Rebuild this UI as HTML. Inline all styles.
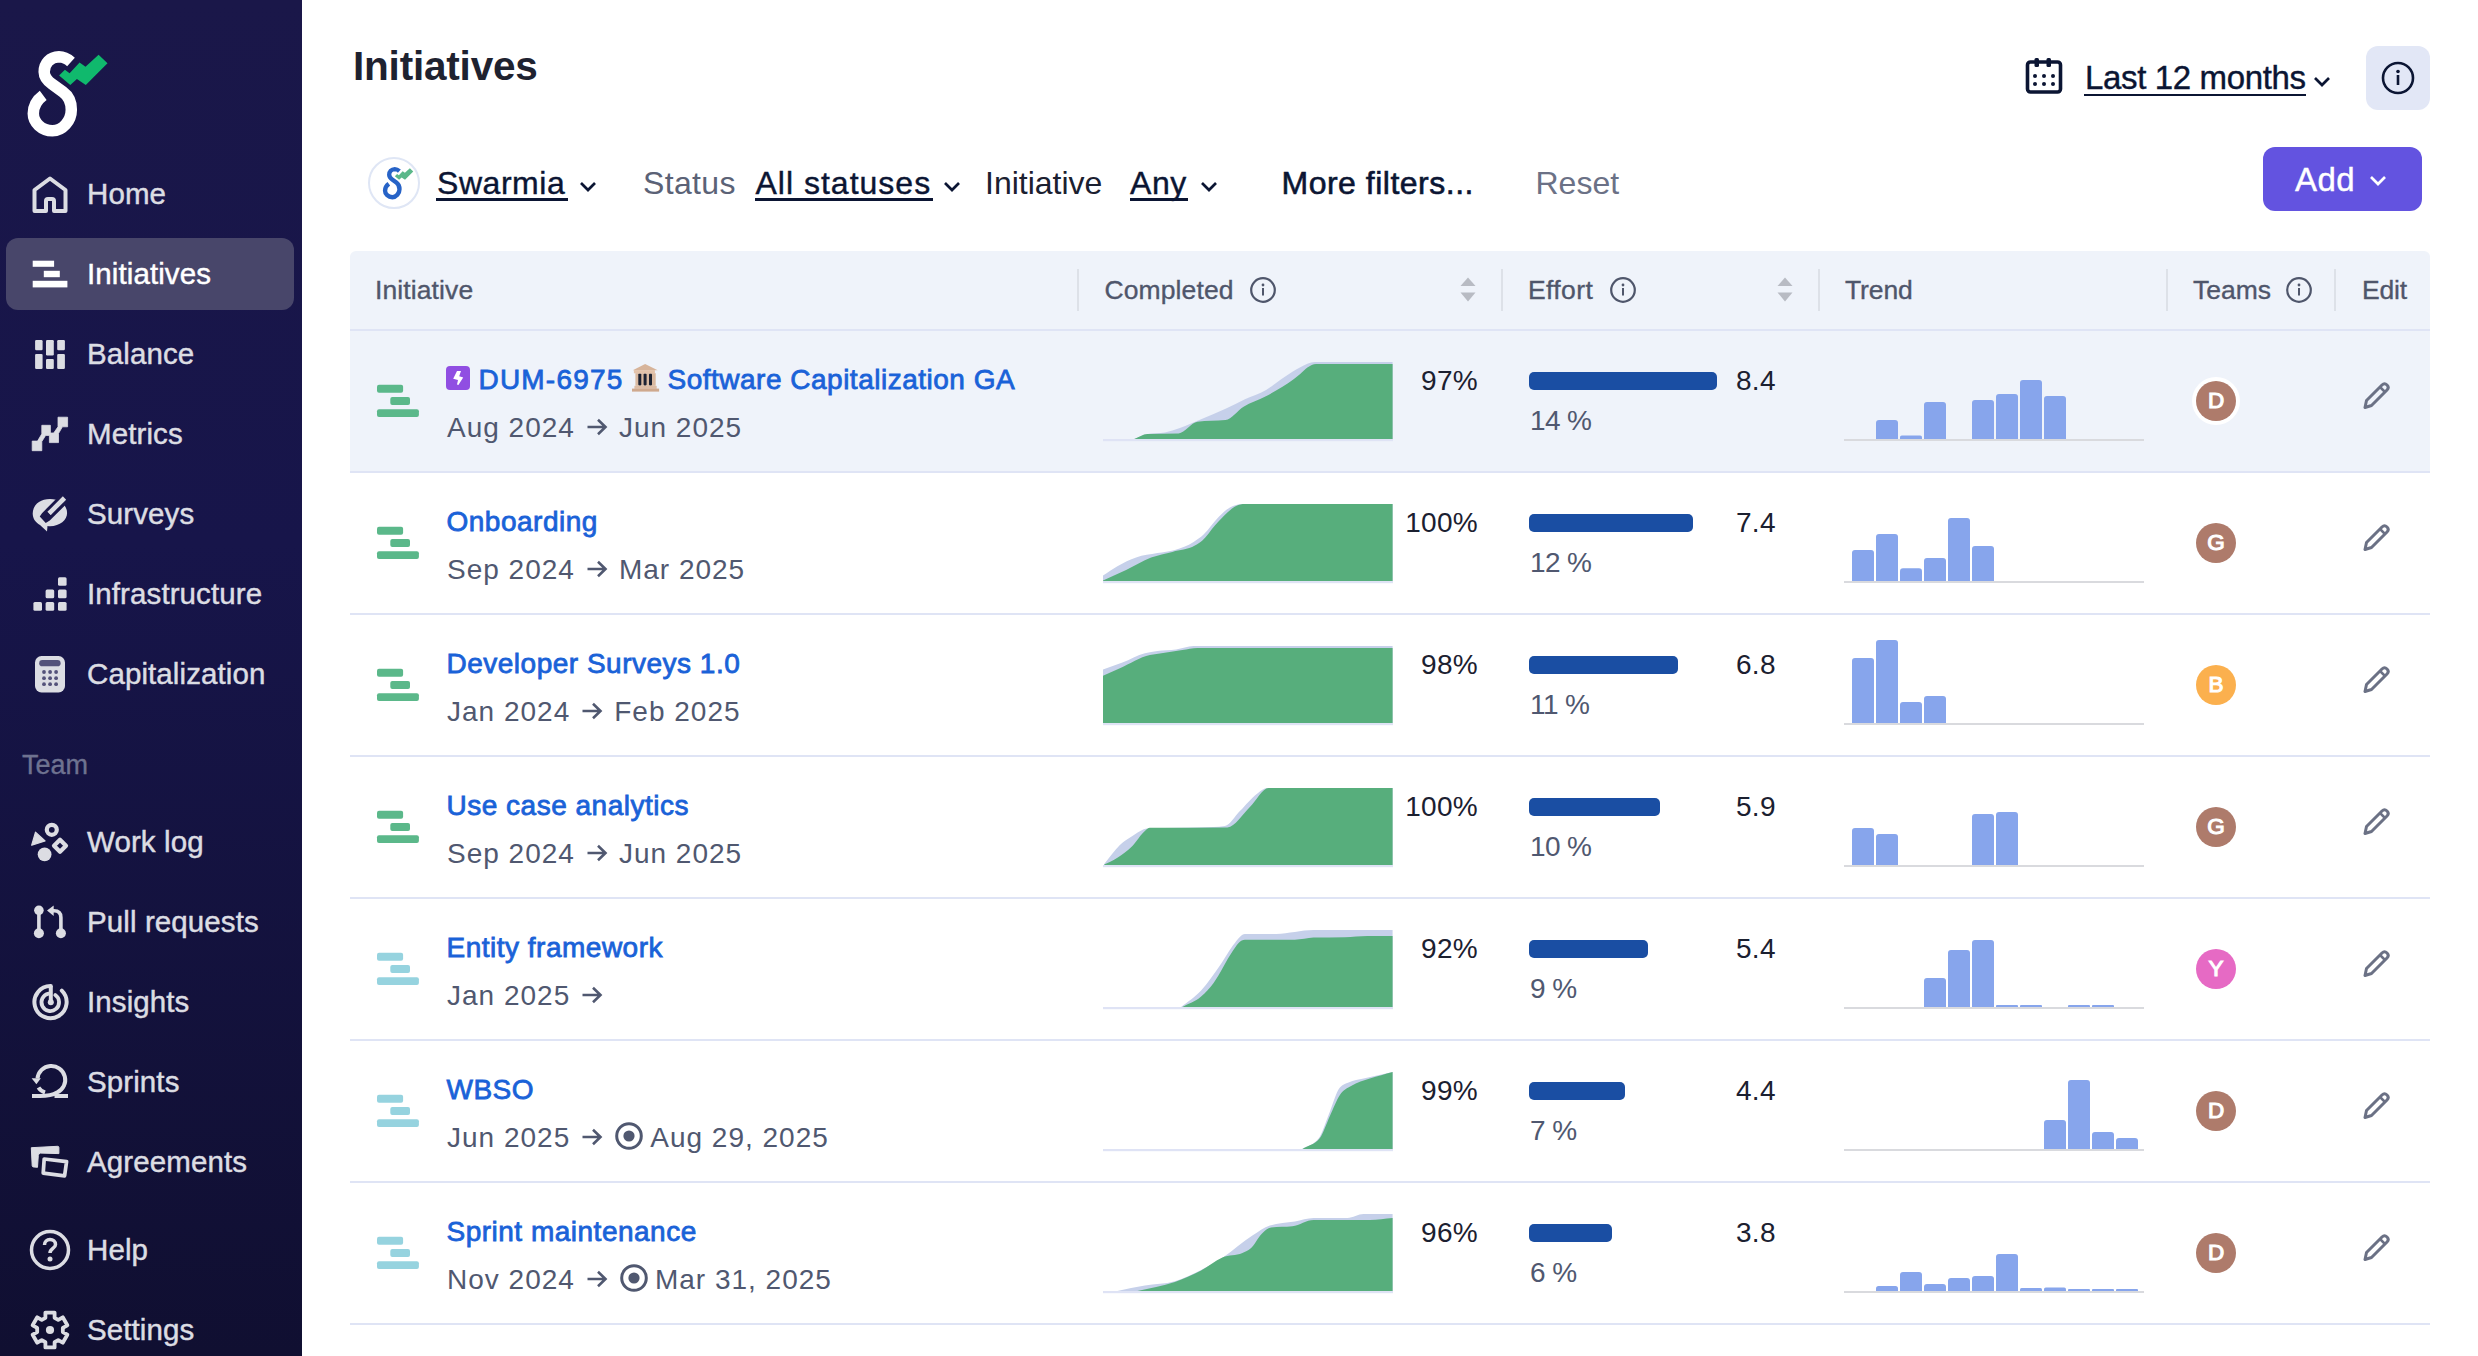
<!DOCTYPE html>
<html><head><meta charset="utf-8"><title>Initiatives</title>
<style>
*{box-sizing:border-box;margin:0;padding:0}
html,body{width:2478px;height:1356px;overflow:hidden;background:#ffffff;font-family:"Liberation Sans",sans-serif}
.t{position:absolute;white-space:nowrap;line-height:1}
#sb{position:absolute;left:0;top:0;width:302px;height:1356px;background:linear-gradient(180deg,#1a1749 0%,#17154a 40%,#100f31 100%)}
.nav{color:#dcdde3;letter-spacing:0.1px;-webkit-text-stroke:0.45px currentColor}
.ico{position:absolute}
.hdr{color:#4f566b;-webkit-text-stroke:0.35px #4f566b}
.sep{position:absolute;width:2px;height:42px;top:269px;background:#dde1e8}
.row{position:absolute;left:350px;width:2080px;height:142px;border-bottom:2px solid #dfe4f5}
.ttl{color:#1a62d8;letter-spacing:0.5px;-webkit-text-stroke:0.8px #1a62d8}
.dt{color:#505870;letter-spacing:1.0px}
.num{color:#1b2030;letter-spacing:0.3px}
.shr{color:#505870;letter-spacing:-0.6px}
.ebar{position:absolute;height:18px;background:#1a4ea3;border-radius:5px}
.av{position:absolute;width:40px;height:40px;border-radius:50%;color:#fff;font-size:22.5px;line-height:39px;text-align:center;-webkit-text-stroke:1.1px #fff}
.jira{display:inline-block;width:24px;height:1px;position:relative;margin-right:9px;margin-left:-1px}
.jira svg{position:absolute;left:0;bottom:-1px}
.bank{display:inline-block;width:28px;height:1px;margin:0 7px 0 9px;position:relative}.bank svg{position:absolute;left:0;bottom:-3px}
.arr{display:inline-block;width:22px;height:1px;margin:0 11px 0 11px;position:relative}.arr svg{position:absolute;left:0;bottom:1px}
.tgt{display:inline-block;width:28px;height:1px;margin-right:7px;margin-left:1px;position:relative}.tgt svg{position:absolute;left:0;bottom:-3px}
</style></head><body>
<div id="sb"></div>
<svg class="ico" style="left:0;top:0" width="120" height="150" viewBox="0 0 120 150">
<path d="M71,62 C66,57.5 62.5,56.8 59,56.8 C50,57 44.2,63.5 44.2,72 C44.3,77 47,80.5 52,84 L63,92 C68.5,96 71.3,102 71.3,109.7 C71.3,121 62.5,130.8 52.5,130.8 C41.5,130.8 33.3,122.5 33.3,113.6 C33.3,106 37,100 43.2,95.4" fill="none" stroke="#fff" stroke-width="11.5" stroke-linecap="butt"/>
<polygon points="59.1,75.6 64.9,69.8 69.6,73.3 79.6,62.5 85.5,66.7 98.6,54.7 107.5,63.2 85.8,84.9 76.9,79.1 70.3,84.9" fill="#10b96d"/>
</svg>
<div style="position:absolute;left:6px;top:238px;width:288px;height:72px;border-radius:12px;background:#48466a"></div>
<div class="t nav" style="left:87.0px;top:179.2px;font-size:29.5px;color:#dcdde3">Home</div>
<div class="t nav" style="left:87.0px;top:259.2px;font-size:29.5px;color:#ffffff">Initiatives</div>
<div class="t nav" style="left:87.0px;top:339.2px;font-size:29.5px;color:#dcdde3">Balance</div>
<div class="t nav" style="left:87.0px;top:419.2px;font-size:29.5px;color:#dcdde3">Metrics</div>
<div class="t nav" style="left:87.0px;top:499.2px;font-size:29.5px;color:#dcdde3">Surveys</div>
<div class="t nav" style="left:87.0px;top:579.2px;font-size:29.5px;color:#dcdde3">Infrastructure</div>
<div class="t nav" style="left:87.0px;top:659.2px;font-size:29.5px;color:#dcdde3">Capitalization</div>
<div class="t nav" style="left:87.0px;top:827.2px;font-size:29.5px;color:#dcdde3">Work log</div>
<div class="t nav" style="left:87.0px;top:907.2px;font-size:29.5px;color:#dcdde3">Pull requests</div>
<div class="t nav" style="left:87.0px;top:987.2px;font-size:29.5px;color:#dcdde3">Insights</div>
<div class="t nav" style="left:87.0px;top:1067.2px;font-size:29.5px;color:#dcdde3">Sprints</div>
<div class="t nav" style="left:87.0px;top:1147.2px;font-size:29.5px;color:#dcdde3">Agreements</div>
<div class="t nav" style="left:87.0px;top:1235.0px;font-size:29.5px;color:#dcdde3">Help</div>
<div class="t nav" style="left:87.0px;top:1315.0px;font-size:29.5px;color:#dcdde3">Settings</div>
<div class="t " style="left:22.0px;top:752.1px;font-size:27px;color:#6e7290;-webkit-text-stroke:0.35px #6e7290">Team</div>

<svg class="ico" style="left:30px;top:174px" width="40" height="40" viewBox="0 0 40 40"><path d="M4.5,16 L20,4.5 L35.5,16 V37 H24 V27 Q24,25 22,25 H18 Q16,25 16,27 V37 H4.5 Z" fill="none" stroke="#dcdde3" stroke-width="4" stroke-linejoin="round"/></svg>
<svg class="ico" style="left:32px;top:260px" width="36" height="28" viewBox="0 0 36 28"><rect x="0.7" y="0.7" width="21.4" height="6.1" fill="#fff"/><rect x="11.8" y="10.8" width="16" height="6.4" fill="#fff"/><rect x="0.7" y="20.8" width="34.7" height="6.6" fill="#fff"/></svg>
<svg class="ico" style="left:34px;top:339px" width="32" height="32" viewBox="0 0 32 32" fill="#dcdde3"><rect x="1.1" y="1" width="7.5" height="10.2" rx="1.2"/><rect x="12" y="1" width="7.8" height="15.4" rx="1.2"/><rect x="23.2" y="1" width="7.7" height="10.2" rx="1.2"/><rect x="1.1" y="14.9" width="7.5" height="15" rx="1.2"/><rect x="12" y="19.9" width="7.8" height="10" rx="1.2"/><rect x="23.2" y="14.9" width="7.7" height="15" rx="1.2"/></svg>
<svg class="ico" style="left:31px;top:416px" width="38" height="36" viewBox="0 0 38 36"><path d="M1.2,34.7 V25.1 H6.5 L10.8,17.9 V9.3 H19.4 V17 H22.7 L27,10.8 V1.2 H36.6 V10.8 H31.4 L27.5,17.5 V26.6 H18.4 V19.4 H14.6 L10.8,25.6 V34.7 Z" fill="#dcdde3" stroke="#dcdde3" stroke-width="0.8" stroke-linejoin="round"/></svg>
<svg class="ico" style="left:31px;top:494px" width="40" height="40" viewBox="0 0 40 40"><path d="M19,5 C9,5 1.7,11 1.7,19.5 C1.7,24.5 4.5,28.5 9,31 L16,37.6 L16.5,32 C17.5,32.2 18.3,32.2 19,32.2 C29,32.2 36.1,26 36.1,19 C36.1,11 29,5 19,5 Z" fill="#dcdde3"/><path d="M33,3.5 L14.5,22 L12.5,25 L16,23 L34,5" fill="none" stroke="#1a1749" stroke-width="9" stroke-linejoin="miter"/><path d="M33.5,4 L18,19.5" stroke="#dcdde3" stroke-width="4.6"/><path d="M15,17.5 L20.5,22 L13.5,24.5 Z" fill="#1a1749"/></svg>
<svg class="ico" style="left:32px;top:576px" width="36" height="36" viewBox="0 0 36 36" fill="#dcdde3"><rect x="1.4" y="26.1" width="8.6" height="8.6" rx="1.5"/><rect x="13.6" y="26.1" width="8.6" height="8.6" rx="1.5"/><rect x="26" y="26.1" width="8.6" height="8.6" rx="1.5"/><rect x="13.6" y="13.6" width="8.6" height="8.6" rx="1.5"/><rect x="26" y="13.6" width="8.6" height="8.6" rx="1.5"/><rect x="26" y="1.2" width="8.6" height="8.6" rx="1.5"/></svg>
<svg class="ico" style="left:34px;top:655px" width="32" height="38" viewBox="0 0 32 38"><rect x="1" y="1" width="30" height="36.4" rx="6.5" fill="#dcdde3"/><rect x="5.2" y="5" width="21.4" height="6.3" rx="3.15" fill="#54527a"/><g fill="#54527a"><circle cx="10" cy="17" r="1.9"/><circle cx="16.1" cy="17" r="1.9"/><circle cx="22.1" cy="17" r="1.9"/><circle cx="10" cy="23.2" r="1.9"/><circle cx="16.1" cy="23.2" r="1.9"/><circle cx="22.1" cy="23.2" r="1.9"/><circle cx="10" cy="29.2" r="1.9"/><circle cx="16.1" cy="29.2" r="1.9"/><circle cx="22.1" cy="29.2" r="1.9"/></g></svg>
<svg class="ico" style="left:30px;top:821px" width="40" height="42" viewBox="0 0 40 42"><circle cx="21.8" cy="8.8" r="5" fill="none" stroke="#dcdde3" stroke-width="4.2"/><path d="M1.7,24.2 L5.5,11.2 L15.1,19.9 Z" fill="#dcdde3" stroke="#dcdde3" stroke-width="1.2" stroke-linejoin="round"/><circle cx="14.6" cy="33.3" r="6.9" fill="#dcdde3"/><path d="M30,18.7 L36,24.7 L30,30.7 L24,24.7 Z" fill="none" stroke="#dcdde3" stroke-width="4.2" stroke-linejoin="round"/></svg>
<svg class="ico" style="left:32px;top:904px" width="36" height="36" viewBox="0 0 36 36"><circle cx="6.9" cy="6.3" r="4.8" fill="#dcdde3"/><circle cx="6.9" cy="29.3" r="5" fill="#dcdde3"/><circle cx="28.9" cy="29.3" r="5" fill="#dcdde3"/><path d="M6.9,6.3 V29.3" stroke="#dcdde3" stroke-width="3.6"/><path d="M28.9,29.3 V13.5 C28.9,9.2 26.3,6.8 22,6.8 H19" fill="none" stroke="#dcdde3" stroke-width="3.6"/><path d="M15,6.6 L21.7,1.4 L21.7,12 Z" fill="#dcdde3"/></svg>
<svg class="ico" style="left:30px;top:982px" width="40" height="40" viewBox="0 0 40 40"><path d="M20.8,4 A16.1,16.1 0 1 0 31.8,8.6" fill="none" stroke="#dcdde3" stroke-width="4" stroke-linecap="round"/><path d="M18.5,11.6 A8.8,8.8 0 1 0 25.3,13" fill="none" stroke="#dcdde3" stroke-width="3.8" stroke-linecap="round"/><path d="M20.8,4 V20" stroke="#dcdde3" stroke-width="4"/><circle cx="20.8" cy="20.3" r="3" fill="#dcdde3"/></svg>
<svg class="ico" style="left:30px;top:1060px" width="40" height="40" viewBox="0 0 40 40"><path d="M7.5,18.5 A13.9,13.9 0 1 1 27,32.5 C22,35.5 16,36 10,36 H2" fill="none" stroke="#dcdde3" stroke-width="4"/><path d="M24.5,36 H38" stroke="#dcdde3" stroke-width="4"/><path d="M8.5,27.5 C10,30 12,31.5 15,32.5" fill="none" stroke="#dcdde3" stroke-width="4"/><path d="M1.6,18.2 L10.9,18.2 L6.4,24.3 Z" fill="#dcdde3"/></svg>
<svg class="ico" style="left:30px;top:1144px" width="40" height="40" viewBox="0 0 40 40"><path d="M1.3,3.7 L27.6,2.3 Q28.8,2.3 28.9,3.5 L28.9,9.6 L10.5,9.1 Q8.5,9.3 8.3,11.5 L7.5,23.3 L3.2,22.9 Q2.3,22.8 2.2,21.8 Z" fill="#dcdde3" stroke="#dcdde3" stroke-width="1" stroke-linejoin="round"/><path d="M14.2,15 L36.6,17.6 L34.6,31.8 L13.2,29.2 Z" fill="none" stroke="#dcdde3" stroke-width="3.7" stroke-linejoin="round"/></svg>
<svg class="ico" style="left:28px;top:1228px" width="44" height="44" viewBox="0 0 44 44"><circle cx="22" cy="22" r="18.5" fill="none" stroke="#dcdde3" stroke-width="3.5"/><path d="M16.5,17 C16.5,13.5 19,11.5 22,11.5 C25,11.5 27.5,13.5 27.5,16.5 C27.5,20.5 22,20.5 22,25" fill="none" stroke="#dcdde3" stroke-width="3.5"/><circle cx="22" cy="31" r="2.5" fill="#dcdde3"/></svg>
<svg class="ico" style="left:30px;top:1310px" width="40" height="40" viewBox="0 0 40 40"><path d="M15.40,7.84 L15.40,2.60 L24.60,2.60 L24.60,7.84 L28.23,9.94 L32.77,7.32 L37.37,15.28 L32.83,17.90 L32.83,22.10 L37.37,24.72 L32.77,32.68 L28.23,30.06 L24.60,32.16 L24.60,37.40 L15.40,37.40 L15.40,32.16 L11.77,30.06 L7.23,32.68 L2.63,24.72 L7.17,22.10 L7.17,17.90 L2.63,15.28 L7.23,7.32 L11.77,9.94 Z" fill="none" stroke="#dcdde3" stroke-width="3.8" stroke-linejoin="round"/><circle cx="20" cy="20" r="4.1" fill="#dcdde3"/></svg>
<div class="t " style="left:353.0px;top:45.7px;font-size:40.5px;font-weight:bold;color:#1e2230;letter-spacing:-0.2px">Initiatives</div>
<svg class="ico" style="left:2024px;top:56px" width="40" height="40" viewBox="0 0 40 40"><rect x="3.5" y="6" width="33" height="30" rx="3" fill="none" stroke="#0b1533" stroke-width="3.6"/><rect x="10.5" y="2" width="4.5" height="9" rx="1.5" fill="#0b1533"/><rect x="22.5" y="2" width="4.5" height="9" rx="1.5" fill="#0b1533"/><g fill="#0b1533"><circle cx="11" cy="20" r="2"/><circle cx="20" cy="20" r="2"/><circle cx="29" cy="20" r="2"/><circle cx="11" cy="28" r="2"/><circle cx="20" cy="28" r="2"/><circle cx="29" cy="28" r="2"/></g></svg>
<div class="t " style="left:2085.0px;top:61.4px;font-size:33px;color:#0b1533;letter-spacing:-0.35px;-webkit-text-stroke:0.4px #0b1533">Last 12 months</div>
<div style="position:absolute;left:2084px;top:93.5px;width:222px;height:2.6px;background:#0b1533"></div>
<svg class="ico" style="left:2313px;top:75.5px" width="18" height="12" viewBox="0 0 18 12"><path d="M2,2 L9.0,9 L16,2" fill="none" stroke="#0b1533" stroke-width="2.7"/></svg>
<div style="position:absolute;left:2366px;top:46px;width:64px;height:63.5px;border-radius:12px;background:#e2e7f6"></div>
<svg class="ico" style="left:2380px;top:60px" width="36" height="36" viewBox="0 0 36 36"><circle cx="18" cy="18" r="15" fill="none" stroke="#0b1533" stroke-width="2.6"/><circle cx="18" cy="11.5" r="1.8" fill="#0b1533"/><rect x="16.7" y="15" width="2.6" height="10" fill="#0b1533"/></svg>
<div style="position:absolute;left:368px;top:157px;width:52px;height:52px;border-radius:50%;border:2px solid #dfe6f5;background:#fff"></div>
<svg class="ico" style="left:368px;top:157px" width="52" height="52" viewBox="0 0 52 52"><g transform="translate(4.4,-9.5) scale(0.38)">
<path d="M71,62 C66,57.5 62.5,56.8 59,56.8 C50,57 44.2,63.5 44.2,72 C44.3,77 47,80.5 52,84 L63,92 C68.5,96 71.3,102 71.3,109.7 C71.3,121 62.5,130.8 52.5,130.8 C41.5,130.8 33.3,122.5 33.3,113.6 C33.3,106 37,100 43.2,95.4" fill="none" stroke="#2763c7" stroke-width="11.5"/>
<polygon points="59.1,75.6 64.9,69.8 69.6,73.3 79.6,62.5 85.5,66.7 98.6,54.7 107.5,63.2 85.8,84.9 76.9,79.1 70.3,84.9" fill="#5bb88a"/></g>
</svg>
<div class="t " style="left:437.0px;top:166.7px;font-size:32px;color:#0b1533;letter-spacing:0.55px;-webkit-text-stroke:0.4px #0b1533">Swarmia</div>
<div style="position:absolute;left:436px;top:198.3px;width:132px;height:2.5px;background:#0b1533"></div>
<svg class="ico" style="left:578.5px;top:180.5px" width="18" height="12" viewBox="0 0 18 12"><path d="M2,2 L9.0,9 L16,2" fill="none" stroke="#0b1533" stroke-width="2.7"/></svg>
<div class="t " style="left:643.0px;top:166.9px;font-size:32px;color:#5b6276;letter-spacing:0.35px">Status</div>
<div class="t " style="left:755.5px;top:166.9px;font-size:32px;color:#0b1533;letter-spacing:1.0px;-webkit-text-stroke:0.4px #0b1533">All statuses</div>
<div style="position:absolute;left:755px;top:198.3px;width:178px;height:2.5px;background:#0b1533"></div>
<svg class="ico" style="left:943px;top:180.5px" width="18" height="12" viewBox="0 0 18 12"><path d="M2,2 L9.0,9 L16,2" fill="none" stroke="#0b1533" stroke-width="2.7"/></svg>
<div class="t " style="left:985.0px;top:166.9px;font-size:32px;color:#1b2030;letter-spacing:0.0px">Initiative</div>
<div class="t " style="left:1130.0px;top:166.9px;font-size:32px;color:#0b1533;letter-spacing:0.6px;-webkit-text-stroke:0.4px #0b1533">Any</div>
<div style="position:absolute;left:1130px;top:198.3px;width:58px;height:2.5px;background:#0b1533"></div>
<svg class="ico" style="left:1199.5px;top:180.5px" width="18" height="12" viewBox="0 0 18 12"><path d="M2,2 L9.0,9 L16,2" fill="none" stroke="#0b1533" stroke-width="2.7"/></svg>
<div class="t " style="left:1281.5px;top:166.9px;font-size:32px;color:#0b1533;letter-spacing:0.5px;-webkit-text-stroke:0.6px #0b1533">More filters...</div>
<div class="t " style="left:1535.5px;top:166.9px;font-size:32px;color:#6b7186;letter-spacing:0px">Reset</div>
<div style="position:absolute;left:2263px;top:147px;width:159px;height:64px;border-radius:12px;background:#6353e0"></div>
<div class="t " style="left:2295.0px;top:162.5px;font-size:33px;color:#fff;letter-spacing:0.5px;-webkit-text-stroke:0.4px #fff">Add</div>
<svg class="ico" style="left:2369px;top:174.5px" width="18" height="12" viewBox="0 0 18 12"><path d="M2,2 L9.0,9 L16,2" fill="none" stroke="#fff" stroke-width="2.7"/></svg>
<div style="position:absolute;left:350px;top:251px;width:2080px;height:80px;background:#eff3fa;border-radius:6px 6px 0 0;border-bottom:2px solid #dfe4f5"></div>
<div class="sep" style="left:1077px"></div>
<div class="sep" style="left:1501px"></div>
<div class="sep" style="left:1818px"></div>
<div class="sep" style="left:2166px"></div>
<div class="sep" style="left:2334px"></div>
<div class="t hdr" style="left:375.0px;top:276.7px;font-size:26.5px;letter-spacing:0.1px">Initiative</div>
<div class="t hdr" style="left:1104.5px;top:276.7px;font-size:26.5px;letter-spacing:0.1px">Completed</div>
<div class="t hdr" style="left:1528.0px;top:276.7px;font-size:26.5px;letter-spacing:0.4px">Effort</div>
<div class="t hdr" style="left:1845.0px;top:276.7px;font-size:26.5px;letter-spacing:-0.1px">Trend</div>
<div class="t hdr" style="left:2193.0px;top:276.7px;font-size:26.5px;letter-spacing:0.0px">Teams</div>
<div class="t hdr" style="left:2362.0px;top:276.7px;font-size:26.5px;letter-spacing:-0.2px">Edit</div>
<svg class="ico" style="left:1249px;top:276px" width="28" height="28" viewBox="0 0 28 28"><circle cx="14" cy="14" r="11.8" fill="none" stroke="#4f566b" stroke-width="2.2"/><circle cx="14" cy="9" r="1.4" fill="#4f566b"/><rect x="13" y="12" width="2" height="7.5" fill="#4f566b"/></svg>
<svg class="ico" style="left:1609px;top:276px" width="28" height="28" viewBox="0 0 28 28"><circle cx="14" cy="14" r="11.8" fill="none" stroke="#4f566b" stroke-width="2.2"/><circle cx="14" cy="9" r="1.4" fill="#4f566b"/><rect x="13" y="12" width="2" height="7.5" fill="#4f566b"/></svg>
<svg class="ico" style="left:2285px;top:276px" width="28" height="28" viewBox="0 0 28 28"><circle cx="14" cy="14" r="11.8" fill="none" stroke="#4f566b" stroke-width="2.2"/><circle cx="14" cy="9" r="1.4" fill="#4f566b"/><rect x="13" y="12" width="2" height="7.5" fill="#4f566b"/></svg>
<svg class="ico" style="left:1460px;top:277px" width="16" height="25" viewBox="0 0 16 25"><path d="M8,0.5 L15.5,9 H0.5 Z" fill="#b8bbc3"/><path d="M0.5,15.5 H15.5 L8,24.5 Z" fill="#b8bbc3"/></svg>
<svg class="ico" style="left:1777px;top:277px" width="16" height="25" viewBox="0 0 16 25"><path d="M8,0.5 L15.5,9 H0.5 Z" fill="#b8bbc3"/><path d="M0.5,15.5 H15.5 L8,24.5 Z" fill="#b8bbc3"/></svg>
<div class="row" style="top:331px;height:142px;background:#eff3fa"></div>
<svg class="ico" style="left:376px;top:384px" width="44" height="34" viewBox="0 0 44 34"><rect x="1" y="0.7" width="26.1" height="8.1" rx="2" fill="#5bb88a"/><rect x="14.3" y="13.1" width="19.7" height="7.8" rx="2" fill="#5bb88a"/><rect x="1" y="25.2" width="41.9" height="7.8" rx="2" fill="#5bb88a"/></svg>
<div class="t ttl" style="left:446.5px;top:365.5px;font-size:28px;"><span class="jira"><svg width="24" height="24" viewBox="0 0 24 24"><rect width="24" height="24" rx="4" fill="#904ee2"/><path d="M11,5 L15,5 L13.2,10.2 L17.2,11.4 L12.4,19 L11,18.4 L12,14 L7.2,12.8 Z" fill="#fff"/></svg></span><span style="letter-spacing:1.2px">DUM-6975</span><span class="bank"><svg width="28" height="28" viewBox="0 0 28 28"><path d="M13.1,0 L25.7,6.3 H0.8 Z" fill="#d7b49a"/><rect x="1.9" y="6.1" width="21" height="3.2" fill="#e3c3ab"/><rect x="3.4" y="9.2" width="20.3" height="12.6" fill="#d9b9a0"/><rect x="6.3" y="9.8" width="3" height="11.6" rx="0.8" fill="#1c2233"/><rect x="11.6" y="9.8" width="3" height="11.6" rx="0.8" fill="#1c2233"/><rect x="17" y="9.8" width="3" height="11.6" rx="0.8" fill="#1c2233"/><rect x="2.4" y="21.8" width="22.3" height="3" fill="#dcbca4"/><rect x="0" y="24.6" width="27.1" height="3" fill="#cfa98e"/></svg></span>Software Capitalization GA</div>
<div class="t dt" style="left:447.0px;top:413.6px;font-size:28px;">Aug 2024<span class="arr"><svg width="22" height="18" viewBox="0 0 22 18"><path d="M1.5,9 H19.5 M12,1.8 L19.5,9 L12,16.2" fill="none" stroke="#505870" stroke-width="2.6"/></svg></span>Jun 2025</div>
<svg class="ico" style="left:1103px;top:362px" width="291" height="80" viewBox="0 0 291 80"><rect x="0" y="77" width="290" height="2.2" fill="#dfe3f5"/><path d="M31.25,77.00 C35.63,75.30 40.02,72.65 44.40,71.90 C50.23,70.90 56.07,71.40 61.90,70.40 C66.90,69.54 71.90,67.71 76.90,66.00 C83.97,63.58 91.03,60.21 98.10,57.25 C106.43,53.76 114.77,50.49 123.10,46.60 C129.37,43.68 135.63,40.20 141.90,37.25 C148.97,33.92 156.03,31.98 163.10,27.90 C169.37,24.28 175.63,18.87 181.90,14.75 C186.90,11.46 191.90,7.86 196.90,5.40 C201.90,2.94 206.90,0.00 211.90,0.00 C237.80,0.00 263.70,0.00 289.60,0.00 L289.6,77 L31.2,77 Z" fill="#c6d0ea"/><path d="M31.25,77.00 C35.63,75.30 40.02,72.04 44.40,71.90 C54.80,71.57 65.20,71.73 75.60,71.40 C81.87,71.20 88.13,60.49 94.40,59.75 C103.77,58.65 113.13,59.20 122.50,58.10 C128.53,57.39 134.57,48.46 140.60,44.75 C147.70,40.39 154.80,38.50 161.90,34.75 C165.63,32.78 169.37,30.73 173.10,28.50 C181.03,23.76 188.97,19.06 196.90,12.25 C199.40,10.10 201.90,7.09 204.40,5.40 C207.30,3.44 210.20,1.90 213.10,1.90 C238.60,1.90 264.10,1.90 289.60,1.90 L289.6,77 L31.2,77 Z" fill="#57ae7c"/></svg>
<div class="t num" style="right:1000.0px;top:367.3px;font-size:28px;">97%</div>
<div class="ebar" style="left:1529px;top:372px;width:188px"></div>
<div class="t num" style="left:1736.0px;top:367.3px;font-size:28px;">8.4</div>
<div class="t shr" style="left:1530.0px;top:407.3px;font-size:28px;">14 %</div>
<div style="position:absolute;left:1844px;top:438.5px;width:300px;height:2px;background:#d9dade"></div>
<svg class="ico" style="left:1844px;top:339px" width="300" height="100" viewBox="0 0 300 100"><defs><clipPath id="cp0"><rect x="0" y="0" width="300" height="100"/></clipPath></defs><g clip-path="url(#cp0)"><rect x="32" y="81.0" width="22" height="22.0" rx="3.0" fill="#87a5ec"/><rect x="56" y="96.5" width="22" height="5.2" rx="1.8" fill="#87a5ec"/><rect x="80" y="63.0" width="22" height="40.0" rx="3.0" fill="#87a5ec"/><rect x="128" y="61.0" width="22" height="42.0" rx="3.0" fill="#87a5ec"/><rect x="152" y="55.0" width="22" height="48.0" rx="3.0" fill="#87a5ec"/><rect x="176" y="41.0" width="22" height="62.0" rx="3.0" fill="#87a5ec"/><rect x="200" y="57.0" width="22" height="46.0" rx="3.0" fill="#87a5ec"/></g></svg>
<div style="position:absolute;left:2192px;top:376.7px;width:48px;height:48px;border-radius:50%;background:#fff"></div>
<div class="av" style="left:2196px;top:380.7px;background:#ae7b6b">D</div>
<svg class="ico" style="left:2360px;top:380px" width="32" height="32" viewBox="0 0 32 32"><path d="M5,27.5 L6.5,20.5 L22,5 C23.5,3.5 25.5,3.5 27,5 C28.5,6.5 28.5,8.5 27,10 L11.5,25.5 Z" fill="none" stroke="#6b7185" stroke-width="3" stroke-linejoin="round"/><path d="M20,7 L25,12" stroke="#6b7185" stroke-width="2.5"/></svg>
<div class="row" style="top:473px;height:142px;background:transparent"></div>
<svg class="ico" style="left:376px;top:526px" width="44" height="34" viewBox="0 0 44 34"><rect x="1" y="0.7" width="26.1" height="8.1" rx="2" fill="#5bb88a"/><rect x="14.3" y="13.1" width="19.7" height="7.8" rx="2" fill="#5bb88a"/><rect x="1" y="25.2" width="41.9" height="7.8" rx="2" fill="#5bb88a"/></svg>
<div class="t ttl" style="left:446.5px;top:507.5px;font-size:28px;">Onboarding</div>
<div class="t dt" style="left:447.0px;top:555.6px;font-size:28px;">Sep 2024<span class="arr"><svg width="22" height="18" viewBox="0 0 22 18"><path d="M1.5,9 H19.5 M12,1.8 L19.5,9 L12,16.2" fill="none" stroke="#505870" stroke-width="2.6"/></svg></span>Mar 2025</div>
<svg class="ico" style="left:1103px;top:504px" width="291" height="80" viewBox="0 0 291 80"><rect x="0" y="77" width="290" height="2.2" fill="#dfe3f5"/><path d="M0.00,71.60 C4.80,68.48 9.60,64.99 14.40,62.25 C20.63,58.69 26.87,55.66 33.10,53.50 C40.20,51.05 47.30,50.45 54.40,49.10 C60.23,47.99 66.07,47.76 71.90,46.00 C78.13,44.12 84.37,41.89 90.60,37.90 C93.93,35.77 97.27,33.46 100.60,30.40 C105.60,25.82 110.60,17.78 115.60,12.90 C119.37,9.22 123.13,5.61 126.90,3.50 C131.07,1.17 135.23,0.00 139.40,0.00 C189.47,0.00 239.53,0.00 289.60,0.00 L289.6,77 L0.0,77 Z" fill="#c6d0ea"/><path d="M0.00,76.50 C7.70,73.00 15.40,69.67 23.10,66.00 C31.43,62.03 39.77,56.60 48.10,53.50 C55.20,50.86 62.30,49.83 69.40,47.90 C76.90,45.87 84.40,45.80 91.90,41.60 C94.40,40.20 96.90,38.77 99.40,36.60 C103.57,32.99 107.73,26.28 111.90,21.60 C116.07,16.92 120.23,12.16 124.40,8.50 C127.30,5.96 130.20,3.15 133.10,1.90 C136.03,0.63 138.97,0.00 141.90,0.00 C191.13,0.00 240.37,0.00 289.60,0.00 L289.6,77 L0.0,77 Z" fill="#57ae7c"/></svg>
<div class="t num" style="right:1000.0px;top:509.3px;font-size:28px;">100%</div>
<div class="ebar" style="left:1529px;top:514px;width:164px"></div>
<div class="t num" style="left:1736.0px;top:509.3px;font-size:28px;">7.4</div>
<div class="t shr" style="left:1530.0px;top:549.3px;font-size:28px;">12 %</div>
<div style="position:absolute;left:1844px;top:580.5px;width:300px;height:2px;background:#d9dade"></div>
<svg class="ico" style="left:1844px;top:481px" width="300" height="100" viewBox="0 0 300 100"><defs><clipPath id="cp1"><rect x="0" y="0" width="300" height="100"/></clipPath></defs><g clip-path="url(#cp1)"><rect x="8" y="69.0" width="22" height="34.0" rx="3.0" fill="#87a5ec"/><rect x="32" y="53.0" width="22" height="50.0" rx="3.0" fill="#87a5ec"/><rect x="56" y="87.3" width="22" height="15.7" rx="3.0" fill="#87a5ec"/><rect x="80" y="77.0" width="22" height="26.0" rx="3.0" fill="#87a5ec"/><rect x="104" y="37.0" width="22" height="66.0" rx="3.0" fill="#87a5ec"/><rect x="128" y="65.0" width="22" height="38.0" rx="3.0" fill="#87a5ec"/></g></svg>
<div class="av" style="left:2196px;top:522.7px;background:#ae7b6b">G</div>
<svg class="ico" style="left:2360px;top:522px" width="32" height="32" viewBox="0 0 32 32"><path d="M5,27.5 L6.5,20.5 L22,5 C23.5,3.5 25.5,3.5 27,5 C28.5,6.5 28.5,8.5 27,10 L11.5,25.5 Z" fill="none" stroke="#6b7185" stroke-width="3" stroke-linejoin="round"/><path d="M20,7 L25,12" stroke="#6b7185" stroke-width="2.5"/></svg>
<div class="row" style="top:615px;height:142px;background:transparent"></div>
<svg class="ico" style="left:376px;top:668px" width="44" height="34" viewBox="0 0 44 34"><rect x="1" y="0.7" width="26.1" height="8.1" rx="2" fill="#5bb88a"/><rect x="14.3" y="13.1" width="19.7" height="7.8" rx="2" fill="#5bb88a"/><rect x="1" y="25.2" width="41.9" height="7.8" rx="2" fill="#5bb88a"/></svg>
<div class="t ttl" style="left:446.5px;top:649.5px;font-size:28px;">Developer Surveys 1.0</div>
<div class="t dt" style="left:447.0px;top:697.6px;font-size:28px;">Jan 2024<span class="arr"><svg width="22" height="18" viewBox="0 0 22 18"><path d="M1.5,9 H19.5 M12,1.8 L19.5,9 L12,16.2" fill="none" stroke="#505870" stroke-width="2.6"/></svg></span>Feb 2025</div>
<svg class="ico" style="left:1103px;top:646px" width="291" height="80" viewBox="0 0 291 80"><rect x="0" y="77" width="290" height="2.2" fill="#dfe3f5"/><path d="M0.00,23.50 C6.47,21.20 12.93,19.08 19.40,16.60 C26.90,13.72 34.40,9.19 41.90,7.25 C46.07,6.17 50.23,5.67 54.40,5.10 C60.63,4.24 66.87,4.40 73.10,3.50 C78.93,2.66 84.77,0.00 90.60,0.00 C156.93,0.00 223.27,0.00 289.60,0.00 L289.6,77 L0.0,77 Z" fill="#c6d0ea"/><path d="M0.00,29.75 C5.63,27.25 11.27,24.74 16.90,22.25 C26.90,17.83 36.90,11.32 46.90,9.10 C50.23,8.36 53.57,8.11 56.90,7.60 C64.40,6.44 71.90,4.99 79.40,3.90 C84.40,3.17 89.40,1.90 94.40,1.90 C159.47,1.90 224.53,1.90 289.60,1.90 L289.6,77 L0.0,77 Z" fill="#57ae7c"/></svg>
<div class="t num" style="right:1000.0px;top:651.3px;font-size:28px;">98%</div>
<div class="ebar" style="left:1529px;top:656px;width:149px"></div>
<div class="t num" style="left:1736.0px;top:651.3px;font-size:28px;">6.8</div>
<div class="t shr" style="left:1530.0px;top:691.3px;font-size:28px;">11 %</div>
<div style="position:absolute;left:1844px;top:722.5px;width:300px;height:2px;background:#d9dade"></div>
<svg class="ico" style="left:1844px;top:623px" width="300" height="100" viewBox="0 0 300 100"><defs><clipPath id="cp2"><rect x="0" y="0" width="300" height="100"/></clipPath></defs><g clip-path="url(#cp2)"><rect x="8" y="35.0" width="22" height="68.0" rx="3.0" fill="#87a5ec"/><rect x="32" y="17.0" width="22" height="86.0" rx="3.0" fill="#87a5ec"/><rect x="56" y="79.0" width="22" height="24.0" rx="3.0" fill="#87a5ec"/><rect x="80" y="73.0" width="22" height="30.0" rx="3.0" fill="#87a5ec"/></g></svg>
<div class="av" style="left:2196px;top:664.7px;background:#fbb04e">B</div>
<svg class="ico" style="left:2360px;top:664px" width="32" height="32" viewBox="0 0 32 32"><path d="M5,27.5 L6.5,20.5 L22,5 C23.5,3.5 25.5,3.5 27,5 C28.5,6.5 28.5,8.5 27,10 L11.5,25.5 Z" fill="none" stroke="#6b7185" stroke-width="3" stroke-linejoin="round"/><path d="M20,7 L25,12" stroke="#6b7185" stroke-width="2.5"/></svg>
<div class="row" style="top:757px;height:142px;background:transparent"></div>
<svg class="ico" style="left:376px;top:810px" width="44" height="34" viewBox="0 0 44 34"><rect x="1" y="0.7" width="26.1" height="8.1" rx="2" fill="#5bb88a"/><rect x="14.3" y="13.1" width="19.7" height="7.8" rx="2" fill="#5bb88a"/><rect x="1" y="25.2" width="41.9" height="7.8" rx="2" fill="#5bb88a"/></svg>
<div class="t ttl" style="left:446.5px;top:791.5px;font-size:28px;">Use case analytics</div>
<div class="t dt" style="left:447.0px;top:839.6px;font-size:28px;">Sep 2024<span class="arr"><svg width="22" height="18" viewBox="0 0 22 18"><path d="M1.5,9 H19.5 M12,1.8 L19.5,9 L12,16.2" fill="none" stroke="#505870" stroke-width="2.6"/></svg></span>Jun 2025</div>
<svg class="ico" style="left:1103px;top:788px" width="291" height="80" viewBox="0 0 291 80"><rect x="0" y="77" width="290" height="2.2" fill="#dfe3f5"/><path d="M1.25,76.00 C6.47,69.63 11.68,61.77 16.90,56.90 C21.07,53.01 25.23,50.65 29.40,48.10 C34.40,45.04 39.40,40.83 44.40,40.60 C66.47,39.60 88.53,40.10 110.60,39.10 C114.37,38.93 118.13,38.77 121.90,38.10 C126.90,37.22 131.90,28.13 136.90,23.10 C142.73,17.24 148.57,9.55 154.40,5.40 C157.73,3.03 161.07,0.00 164.40,0.00 C206.13,0.00 247.87,0.00 289.60,0.00 L289.6,77 L1.2,77 Z" fill="#c6d0ea"/><path d="M1.25,76.60 C5.63,74.32 10.02,72.58 14.40,69.75 C19.40,66.52 24.40,62.97 29.40,57.90 C33.57,53.68 37.73,46.20 41.90,42.90 C43.57,41.58 45.23,39.77 46.90,39.75 C72.73,39.52 98.57,39.63 124.40,39.40 C131.90,39.33 139.40,26.35 146.90,19.10 C153.13,13.07 159.37,0.00 165.60,0.00 C206.93,0.00 248.27,0.00 289.60,0.00 L289.6,77 L1.2,77 Z" fill="#57ae7c"/></svg>
<div class="t num" style="right:1000.0px;top:793.3px;font-size:28px;">100%</div>
<div class="ebar" style="left:1529px;top:798px;width:131px"></div>
<div class="t num" style="left:1736.0px;top:793.3px;font-size:28px;">5.9</div>
<div class="t shr" style="left:1530.0px;top:833.3px;font-size:28px;">10 %</div>
<div style="position:absolute;left:1844px;top:864.5px;width:300px;height:2px;background:#d9dade"></div>
<svg class="ico" style="left:1844px;top:765px" width="300" height="100" viewBox="0 0 300 100"><defs><clipPath id="cp3"><rect x="0" y="0" width="300" height="100"/></clipPath></defs><g clip-path="url(#cp3)"><rect x="8" y="63.0" width="22" height="40.0" rx="3.0" fill="#87a5ec"/><rect x="32" y="69.0" width="22" height="34.0" rx="3.0" fill="#87a5ec"/><rect x="128" y="49.0" width="22" height="54.0" rx="3.0" fill="#87a5ec"/><rect x="152" y="47.0" width="22" height="56.0" rx="3.0" fill="#87a5ec"/></g></svg>
<div class="av" style="left:2196px;top:806.7px;background:#ae7b6b">G</div>
<svg class="ico" style="left:2360px;top:806px" width="32" height="32" viewBox="0 0 32 32"><path d="M5,27.5 L6.5,20.5 L22,5 C23.5,3.5 25.5,3.5 27,5 C28.5,6.5 28.5,8.5 27,10 L11.5,25.5 Z" fill="none" stroke="#6b7185" stroke-width="3" stroke-linejoin="round"/><path d="M20,7 L25,12" stroke="#6b7185" stroke-width="2.5"/></svg>
<div class="row" style="top:899px;height:142px;background:transparent"></div>
<svg class="ico" style="left:376px;top:952px" width="44" height="34" viewBox="0 0 44 34"><rect x="1" y="0.7" width="26.1" height="8.1" rx="2" fill="#96d3df"/><rect x="14.3" y="13.1" width="19.7" height="7.8" rx="2" fill="#96d3df"/><rect x="1" y="25.2" width="41.9" height="7.8" rx="2" fill="#96d3df"/></svg>
<div class="t ttl" style="left:446.5px;top:933.5px;font-size:28px;">Entity framework</div>
<div class="t dt" style="left:447.0px;top:981.6px;font-size:28px;">Jan 2025<span class="arr"><svg width="22" height="18" viewBox="0 0 22 18"><path d="M1.5,9 H19.5 M12,1.8 L19.5,9 L12,16.2" fill="none" stroke="#505870" stroke-width="2.6"/></svg></span></div>
<svg class="ico" style="left:1103px;top:930px" width="291" height="80" viewBox="0 0 291 80"><rect x="0" y="77" width="290" height="2.2" fill="#dfe3f5"/><path d="M78.10,77.00 C84.77,71.47 91.43,67.65 98.10,60.40 C104.37,53.58 110.63,44.33 116.90,35.40 C121.90,28.28 126.90,18.54 131.90,12.90 C135.23,9.14 138.57,4.14 141.90,4.10 C152.30,3.97 162.70,4.03 173.10,3.90 C185.60,3.74 198.10,0.00 210.60,0.00 C236.93,0.00 263.27,0.00 289.60,0.00 L289.6,77 L78.1,77 Z" fill="#c6d0ea"/><path d="M79.40,77.00 C85.63,73.53 91.87,72.08 98.10,66.60 C102.27,62.93 106.43,58.41 110.60,52.90 C116.87,44.61 123.13,30.80 129.40,21.60 C131.47,18.57 133.53,14.87 135.60,12.90 C137.70,10.89 139.80,9.75 141.90,9.75 C158.57,9.75 175.23,9.75 191.90,9.75 C198.13,9.75 204.37,7.74 210.60,7.60 C221.03,7.37 231.47,7.48 241.90,7.25 C249.40,7.08 256.90,6.00 264.40,6.00 C272.80,6.00 281.20,6.00 289.60,6.00 L289.6,77 L79.4,77 Z" fill="#57ae7c"/></svg>
<div class="t num" style="right:1000.0px;top:935.3px;font-size:28px;">92%</div>
<div class="ebar" style="left:1529px;top:940px;width:119px"></div>
<div class="t num" style="left:1736.0px;top:935.3px;font-size:28px;">5.4</div>
<div class="t shr" style="left:1530.0px;top:975.3px;font-size:28px;">9 %</div>
<div style="position:absolute;left:1844px;top:1006.5px;width:300px;height:2px;background:#d9dade"></div>
<svg class="ico" style="left:1844px;top:907px" width="300" height="100" viewBox="0 0 300 100"><defs><clipPath id="cp4"><rect x="0" y="0" width="300" height="100"/></clipPath></defs><g clip-path="url(#cp4)"><rect x="80" y="71.0" width="22" height="32.0" rx="3.0" fill="#87a5ec"/><rect x="104" y="43.0" width="22" height="60.0" rx="3.0" fill="#87a5ec"/><rect x="128" y="33.0" width="22" height="70.0" rx="3.0" fill="#87a5ec"/><rect x="152" y="98.0" width="22" height="3.0" rx="1.0" fill="#87a5ec"/><rect x="176" y="98.0" width="22" height="3.0" rx="1.0" fill="#87a5ec"/><rect x="224" y="98.0" width="22" height="3.0" rx="1.0" fill="#87a5ec"/><rect x="248" y="98.0" width="22" height="3.0" rx="1.0" fill="#87a5ec"/></g></svg>
<div class="av" style="left:2196px;top:948.7px;background:#e66ac4">Y</div>
<svg class="ico" style="left:2360px;top:948px" width="32" height="32" viewBox="0 0 32 32"><path d="M5,27.5 L6.5,20.5 L22,5 C23.5,3.5 25.5,3.5 27,5 C28.5,6.5 28.5,8.5 27,10 L11.5,25.5 Z" fill="none" stroke="#6b7185" stroke-width="3" stroke-linejoin="round"/><path d="M20,7 L25,12" stroke="#6b7185" stroke-width="2.5"/></svg>
<div class="row" style="top:1041px;height:142px;background:transparent"></div>
<svg class="ico" style="left:376px;top:1094px" width="44" height="34" viewBox="0 0 44 34"><rect x="1" y="0.7" width="26.1" height="8.1" rx="2" fill="#96d3df"/><rect x="14.3" y="13.1" width="19.7" height="7.8" rx="2" fill="#96d3df"/><rect x="1" y="25.2" width="41.9" height="7.8" rx="2" fill="#96d3df"/></svg>
<div class="t ttl" style="left:446.5px;top:1075.5px;font-size:28px;">WBSO</div>
<div class="t dt" style="left:447.0px;top:1123.6px;font-size:28px;">Jun 2025<span class="arr"><svg width="22" height="18" viewBox="0 0 22 18"><path d="M1.5,9 H19.5 M12,1.8 L19.5,9 L12,16.2" fill="none" stroke="#505870" stroke-width="2.6"/></svg></span><span class="tgt"><svg width="28" height="28" viewBox="0 0 28 28"><circle cx="14" cy="14" r="12.3" fill="none" stroke="#505870" stroke-width="3"/><circle cx="14" cy="14" r="5.6" fill="#505870"/></svg></span>Aug 29, 2025</div>
<svg class="ico" style="left:1103px;top:1072px" width="291" height="80" viewBox="0 0 291 80"><rect x="0" y="77" width="290" height="2.2" fill="#dfe3f5"/><path d="M199.40,77.00 C204.80,73.53 210.20,73.53 215.60,66.60 C218.93,62.32 222.27,50.90 225.60,42.90 C229.37,33.86 233.13,19.73 236.90,15.40 C239.80,12.07 242.70,11.72 245.60,10.40 C250.60,8.12 255.60,7.82 260.60,6.60 C270.27,4.24 279.93,2.20 289.60,0.00 L289.6,77 L199.4,77 Z" fill="#c6d0ea"/><path d="M199.40,77.00 C205.23,73.33 211.07,73.33 216.90,66.00 C220.23,61.81 223.57,51.18 226.90,44.00 C230.23,36.82 233.57,27.85 236.90,22.90 C240.63,17.35 244.37,16.49 248.10,14.10 C254.37,10.08 260.63,8.79 266.90,6.60 C274.47,3.95 282.03,2.20 289.60,0.00 L289.6,77 L199.4,77 Z" fill="#57ae7c"/></svg>
<div class="t num" style="right:1000.0px;top:1077.3px;font-size:28px;">99%</div>
<div class="ebar" style="left:1529px;top:1082px;width:96px"></div>
<div class="t num" style="left:1736.0px;top:1077.3px;font-size:28px;">4.4</div>
<div class="t shr" style="left:1530.0px;top:1117.3px;font-size:28px;">7 %</div>
<div style="position:absolute;left:1844px;top:1148.5px;width:300px;height:2px;background:#d9dade"></div>
<svg class="ico" style="left:1844px;top:1049px" width="300" height="100" viewBox="0 0 300 100"><defs><clipPath id="cp5"><rect x="0" y="0" width="300" height="100"/></clipPath></defs><g clip-path="url(#cp5)"><rect x="200" y="71.0" width="22" height="32.0" rx="3.0" fill="#87a5ec"/><rect x="224" y="31.0" width="22" height="72.0" rx="3.0" fill="#87a5ec"/><rect x="248" y="83.0" width="22" height="20.0" rx="3.0" fill="#87a5ec"/><rect x="272" y="89.0" width="22" height="14.0" rx="3.0" fill="#87a5ec"/></g></svg>
<div class="av" style="left:2196px;top:1090.7px;background:#ae7b6b">D</div>
<svg class="ico" style="left:2360px;top:1090px" width="32" height="32" viewBox="0 0 32 32"><path d="M5,27.5 L6.5,20.5 L22,5 C23.5,3.5 25.5,3.5 27,5 C28.5,6.5 28.5,8.5 27,10 L11.5,25.5 Z" fill="none" stroke="#6b7185" stroke-width="3" stroke-linejoin="round"/><path d="M20,7 L25,12" stroke="#6b7185" stroke-width="2.5"/></svg>
<div class="row" style="top:1183px;height:142px;background:transparent"></div>
<svg class="ico" style="left:376px;top:1236px" width="44" height="34" viewBox="0 0 44 34"><rect x="1" y="0.7" width="26.1" height="8.1" rx="2" fill="#96d3df"/><rect x="14.3" y="13.1" width="19.7" height="7.8" rx="2" fill="#96d3df"/><rect x="1" y="25.2" width="41.9" height="7.8" rx="2" fill="#96d3df"/></svg>
<div class="t ttl" style="left:446.5px;top:1217.5px;font-size:28px;">Sprint maintenance</div>
<div class="t dt" style="left:447.0px;top:1265.6px;font-size:28px;">Nov 2024<span class="arr"><svg width="22" height="18" viewBox="0 0 22 18"><path d="M1.5,9 H19.5 M12,1.8 L19.5,9 L12,16.2" fill="none" stroke="#505870" stroke-width="2.6"/></svg></span><span class="tgt"><svg width="28" height="28" viewBox="0 0 28 28"><circle cx="14" cy="14" r="12.3" fill="none" stroke="#505870" stroke-width="3"/><circle cx="14" cy="14" r="5.6" fill="#505870"/></svg></span>Mar 31, 2025</div>
<svg class="ico" style="left:1103px;top:1214px" width="291" height="80" viewBox="0 0 291 80"><rect x="0" y="77" width="290" height="2.2" fill="#dfe3f5"/><path d="M14.40,77.00 C23.57,75.20 32.73,73.17 41.90,71.60 C51.90,69.88 61.90,70.15 71.90,67.25 C80.63,64.72 89.37,60.47 98.10,56.00 C105.60,52.16 113.10,47.78 120.60,42.90 C130.20,36.65 139.80,27.70 149.40,21.60 C155.23,17.90 161.07,13.47 166.90,11.60 C175.23,8.93 183.57,9.06 191.90,7.60 C198.13,6.51 204.37,4.17 210.60,4.10 C221.87,3.97 233.13,4.03 244.40,3.90 C249.80,3.84 255.20,0.00 260.60,0.00 C270.27,0.00 279.93,0.00 289.60,0.00 L289.6,77 L14.4,77 Z" fill="#c6d0ea"/><path d="M34.40,77.00 C46.90,73.97 59.40,72.32 71.90,67.90 C80.63,64.81 89.37,61.25 98.10,56.60 C105.20,52.82 112.30,46.42 119.40,43.50 C126.07,40.76 132.73,42.03 139.40,39.10 C142.30,37.82 145.20,36.84 148.10,34.10 C151.43,30.95 154.77,23.83 158.10,20.40 C161.43,16.97 164.77,13.89 168.10,13.50 C175.20,12.67 182.30,13.08 189.40,12.25 C196.47,11.42 203.53,6.00 210.60,6.00 C229.37,6.00 248.13,6.00 266.90,6.00 C274.47,6.00 282.03,4.60 289.60,3.90 L289.6,77 L34.4,77 Z" fill="#57ae7c"/></svg>
<div class="t num" style="right:1000.0px;top:1219.3px;font-size:28px;">96%</div>
<div class="ebar" style="left:1529px;top:1224px;width:83px"></div>
<div class="t num" style="left:1736.0px;top:1219.3px;font-size:28px;">3.8</div>
<div class="t shr" style="left:1530.0px;top:1259.3px;font-size:28px;">6 %</div>
<div style="position:absolute;left:1844px;top:1290.5px;width:300px;height:2px;background:#d9dade"></div>
<svg class="ico" style="left:1844px;top:1191px" width="300" height="100" viewBox="0 0 300 100"><defs><clipPath id="cp6"><rect x="0" y="0" width="300" height="100"/></clipPath></defs><g clip-path="url(#cp6)"><rect x="32" y="95.0" width="22" height="7.5" rx="2.5" fill="#87a5ec"/><rect x="56" y="81.0" width="22" height="22.0" rx="3.0" fill="#87a5ec"/><rect x="80" y="93.0" width="22" height="10.0" rx="3.0" fill="#87a5ec"/><rect x="104" y="87.0" width="22" height="16.0" rx="3.0" fill="#87a5ec"/><rect x="128" y="85.0" width="22" height="18.0" rx="3.0" fill="#87a5ec"/><rect x="152" y="63.0" width="22" height="40.0" rx="3.0" fill="#87a5ec"/><rect x="176" y="97.0" width="22" height="4.5" rx="1.5" fill="#87a5ec"/><rect x="200" y="96.5" width="22" height="5.2" rx="1.8" fill="#87a5ec"/><rect x="224" y="98.0" width="22" height="3.0" rx="1.0" fill="#87a5ec"/><rect x="248" y="98.0" width="22" height="3.0" rx="1.0" fill="#87a5ec"/><rect x="272" y="98.0" width="22" height="3.0" rx="1.0" fill="#87a5ec"/></g></svg>
<div class="av" style="left:2196px;top:1232.7px;background:#ae7b6b">D</div>
<svg class="ico" style="left:2360px;top:1232px" width="32" height="32" viewBox="0 0 32 32"><path d="M5,27.5 L6.5,20.5 L22,5 C23.5,3.5 25.5,3.5 27,5 C28.5,6.5 28.5,8.5 27,10 L11.5,25.5 Z" fill="none" stroke="#6b7185" stroke-width="3" stroke-linejoin="round"/><path d="M20,7 L25,12" stroke="#6b7185" stroke-width="2.5"/></svg>
</body></html>
